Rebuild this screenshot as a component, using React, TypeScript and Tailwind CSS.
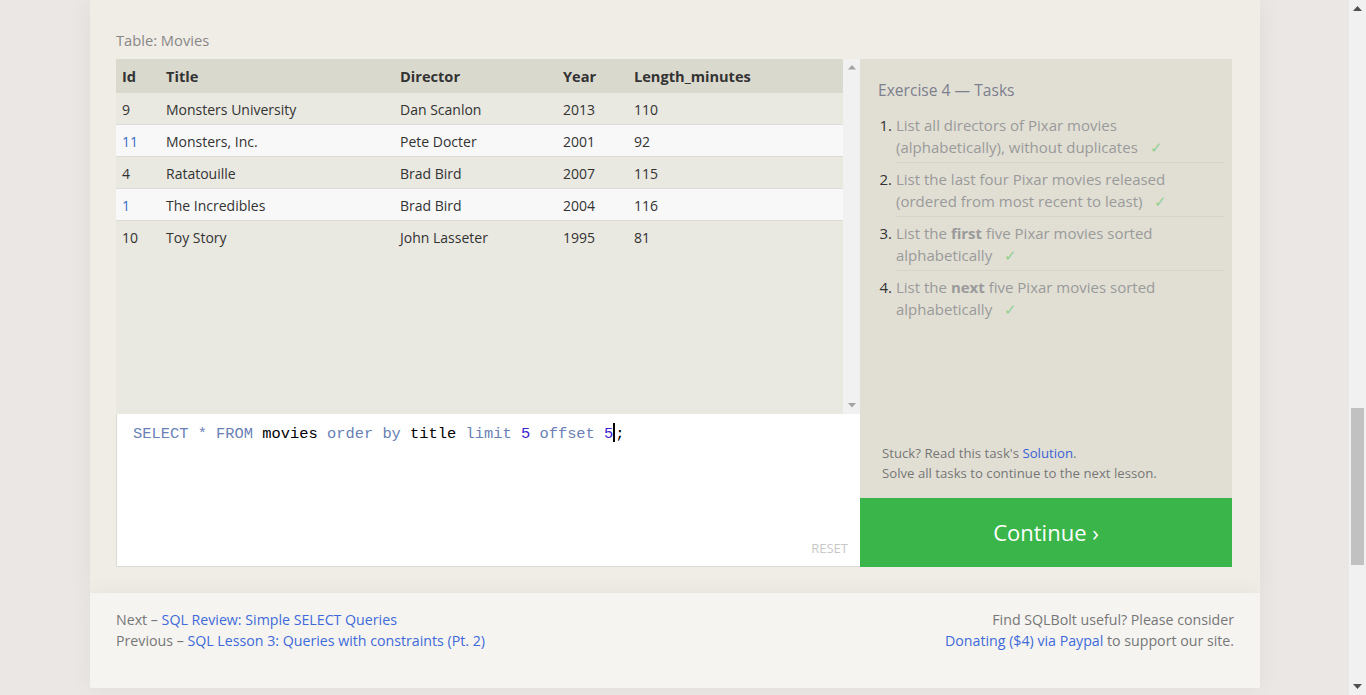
import React from "react";

const rows = [
  { id: "9", title: "Monsters University", director: "Dan Scanlon", year: "2013", len: "110", odd: true },
  { id: "11", title: "Monsters, Inc.", director: "Pete Docter", year: "2001", len: "92", odd: false },
  { id: "4", title: "Ratatouille", director: "Brad Bird", year: "2007", len: "115", odd: true },
  { id: "1", title: "The Incredibles", director: "Brad Bird", year: "2004", len: "116", odd: false },
  { id: "10", title: "Toy Story", director: "John Lasseter", year: "1995", len: "81", odd: true },
];

const cols = "grid grid-cols-[50px_234px_163px_71px_1fr]";

function Check() {
  return <span className="ml-[8px] text-[#8fd08f]">✓</span>;
}

function Task({ n, children, last }: { n: number; children: React.ReactNode; last?: boolean }) {
  return (
    <div className="flex">
      <div className="w-[18px] shrink-0 pr-[4px] pt-[5px] text-right text-[#333]">{n}.</div>
      <div className={"flex-1 pb-[4px] pt-[5px] text-[#9a9a9a] " + (last ? "" : "border-b border-[#d6d4c9]")}>{children}</div>
    </div>
  );
}

export default function App() {
  return (
    <div className="flex h-[695px] w-full overflow-hidden bg-[#ebe7e4] font-['Open_Sans','Noto_Sans',sans-serif] text-[15px]">
      <div className="flex-1 overflow-hidden">
        <div className="ml-[90px] w-[1170px] bg-[#f0ede6] px-[26px] pb-[26px] pt-[30px] shadow-[0_0_24px_rgba(0,0,0,0.06)]">
          <div className="h-[20px] text-[14.7px] leading-[20px] text-[#888]">Table: Movies</div>
          <div className="mt-[9px] flex">
            <div className="w-[744px]">
              <div className="flex h-[355px] bg-[#e9e8e1]">
                <div className="flex-1 text-[14px] text-[#333]">
                  <div className={cols + " h-[34px] items-center bg-[#dad9ce] pt-[1px] text-[14.6px] font-bold"}>
                    <div className="pl-[6px]">Id</div>
                    <div>Title</div>
                    <div>Director</div>
                    <div>Year</div>
                    <div>Length_minutes</div>
                  </div>
                  {rows.map((r, i) => (
                    <div
                      key={r.id}
                      className={
                        cols +
                        " h-[32px] items-center pt-[1px] " +
                        (i < rows.length - 1 ? "border-b border-[#dedcd5] " : "") +
                        (r.odd ? "bg-[#e9e8e1]" : "bg-[#f8f8f8]")
                      }
                    >
                      <div className={"pl-[6px] " + (r.odd ? "" : "text-[#3b6bc0]")}>{r.id}</div>
                      <div>{r.title}</div>
                      <div>{r.director}</div>
                      <div>{r.year}</div>
                      <div>{r.len}</div>
                    </div>
                  ))}
                </div>
                <div className="flex w-[17px] flex-col items-center justify-between bg-[#f1f1f1] py-[6px]">
                  <svg width="8" height="5" viewBox="0 0 8 5"><path d="M4 0 L8 4.5 L0 4.5 Z" fill="#a3a3a3" /></svg>
                  <svg width="8" height="5" viewBox="0 0 8 5"><path d="M0 0 L8 0 L4 4.5 Z" fill="#a3a3a3" /></svg>
                </div>
              </div>
              <div className="relative h-[153px] border-b border-l border-[#dcdad3] bg-white">
                <div className="pl-[16px] pt-[5px] font-['Liberation_Mono',monospace] text-[15.4px] leading-[22px]">
                  <span className="text-[#6a7fb6]">SELECT * FROM </span>
                  <span className="text-black">movies </span>
                  <span className="text-[#6a7fb6]">order by </span>
                  <span className="text-black">title </span>
                  <span className="text-[#6a7fb6]">limit </span>
                  <span className="text-[#3a22d0]">5 </span>
                  <span className="text-[#6a7fb6]">offset </span>
                  <span className="text-[#3a22d0]">5</span>
                  <span className="inline-block h-[19px] w-[2px] translate-y-[4px] bg-black"></span>
                  <span className="text-black">;</span>
                </div>
                <div className="absolute bottom-[8px] right-[12px] text-[13px] text-[#c8c8c8]">RESET</div>
              </div>
            </div>
            <div className="flex w-[372px] flex-col">
              <div className="flex flex-1 flex-col justify-between bg-[#e1dfd4] pb-[15px] pl-[18px] pr-[8px] pt-[19px]">
                <div>
                  <div className="text-[15.6px] leading-[24px] text-[#7d808e]">Exercise 4 — Tasks</div>
                  <div className="mt-[7px] leading-[22px]">
                    <Task n={1}>
                      List all directors of Pixar movies
                      <br />
                      (alphabetically), without duplicates <Check />
                    </Task>
                    <Task n={2}>
                      List the last four Pixar movies released
                      <br />
                      (ordered from most recent to least) <Check />
                    </Task>
                    <Task n={3}>
                      List the <b className="font-bold">first</b> five Pixar movies sorted
                      <br />
                      alphabetically <Check />
                    </Task>
                    <Task n={4} last>
                      List the <b className="font-bold">next</b> five Pixar movies sorted
                      <br />
                      alphabetically <Check />
                    </Task>
                  </div>
                </div>
                <div className="pl-[4px] text-[13.2px] leading-[20px] text-[#777]">
                  <div>
                    Stuck? Read this task's <span className="text-[#3b62d6]">Solution</span>.
                  </div>
                  <div>Solve all tasks to continue to the next lesson.</div>
                </div>
              </div>
              <div className="flex h-[69px] items-center justify-center bg-[#39b54a] text-[22px] text-white">
                Continue ›
              </div>
            </div>
          </div>
        </div>
        <div className="ml-[90px] flex h-[95px] w-[1170px] justify-between rounded-b-[2px] bg-[#f5f4f1] px-[26px] pt-[16px] text-[14.2px] leading-[21px] text-[#777] shadow-[0_0_24px_rgba(0,0,0,0.05)]">
          <div>
            <div>
              Next – <span className="text-[#3f6ad8]">SQL Review: Simple SELECT Queries</span>
            </div>
            <div>
              Previous – <span className="text-[#3f6ad8]">SQL Lesson 3: Queries with constraints (Pt. 2)</span>
            </div>
          </div>
          <div className="text-right">
            <div>Find SQLBolt useful? Please consider</div>
            <div>
              <span className="text-[#3f6ad8]">Donating ($4) via Paypal</span> to support our site.
            </div>
          </div>
        </div>
      </div>
      <div className="flex w-[17px] flex-col items-center bg-[#f1f1f1]">
        <div className="pt-[6px]">
          <svg width="9" height="5" viewBox="0 0 9 5"><path d="M4.5 0 L9 5 L0 5 Z" fill="#505050" /></svg>
        </div>
        <div className="mt-[397px] h-[157px] w-[13px] bg-[#c1c1c1]"></div>
        <div className="mt-auto pb-[6px]">
          <svg width="9" height="5" viewBox="0 0 9 5"><path d="M0 0 L9 0 L4.5 5 Z" fill="#505050" /></svg>
        </div>
      </div>
    </div>
  );
}
